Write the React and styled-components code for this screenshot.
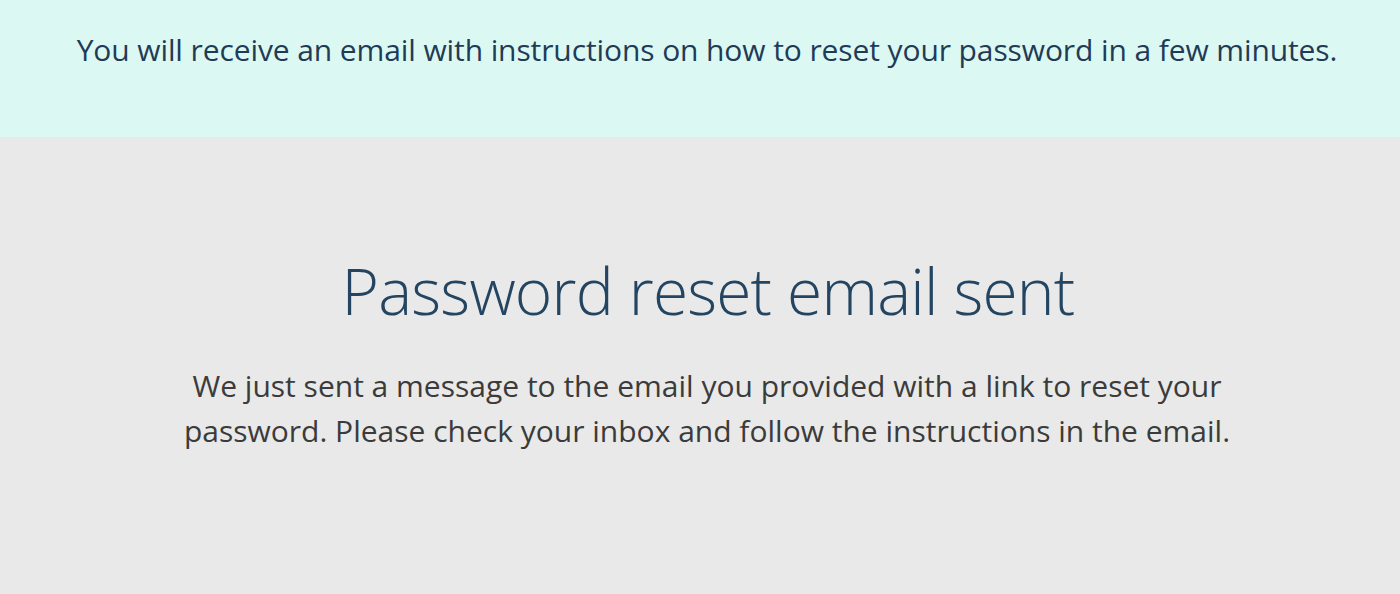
import React from "react"
import styled, { createGlobalStyle } from "styled-components"

const GlobalStyle = createGlobalStyle`
  html, body {
    margin: 0;
    padding: 0;
    background: #e8e9e8;
    font-family: "Open Sans", "Noto Sans", sans-serif;
  }
`

const App = () => {
  return (
    <>
      <GlobalStyle />
      <Page>
        <Banner>
          <BannerText>
            You will receive an email with instructions on how to reset your password in a few minutes.
          </BannerText>
        </Banner>
        <Content>
          <Title>Password reset email sent</Title>
          <Message>
            We just sent a message to the email you provided with a link to reset your
            password. Please check your inbox and follow the instructions in the email.
          </Message>
        </Content>
      </Page>
    </>
  )
}

export default App

const Page = styled.div`
  min-height: 594px;
  background: #e8e9e8;
`

const Banner = styled.div`
  height: 137px;
  background: #dcf8f3;
  display: flex;
  justify-content: center;
  padding-top: 28px;
  box-sizing: border-box;
`

const BannerText = styled.p`
  margin: 0 0 0 14px;
  font-size: 30px;
  line-height: 44px;
  font-weight: 400;
  color: #1f3b56;
  letter-spacing: -0.1px;
`

const Content = styled.div`
  display: flex;
  flex-direction: column;
  align-items: center;
  padding-top: 114px;
`

const Title = styled.h1`
  margin: 0 0 0 16px;
  font-size: 64px;
  line-height: 80px;
  font-weight: 300;
  color: #244562;
  letter-spacing: -0.8px;
`

const Message = styled.p`
  margin: 32px 0 0 14px;
  width: 1080px;
  text-align: center;
  font-size: 30px;
  line-height: 45px;
  font-weight: 400;
  color: #3b3b3b;
  letter-spacing: 0px;
`
